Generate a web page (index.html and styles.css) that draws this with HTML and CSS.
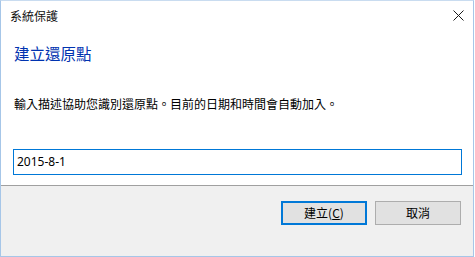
FILE: index.html
```html
<!DOCTYPE html>
<html lang="zh-Hant">
<head>
<meta charset="utf-8">
<link rel="stylesheet" href="styles.css">
</head>
<body>
<div class="window">
  <div class="titlebar">
    <span class="title">系統保護</span>
    <svg class="close" width="11" height="11" viewBox="0 0 11 11"><path d="M0.5 0.5 L10.5 10.5 M10.5 0.5 L0.5 10.5" stroke="#1a1a1a" stroke-width="1"/></svg>
  </div>
  <div class="content">
    <div class="heading">建立還原點</div>
    <div class="desc">輸入描述協助您識別還原點。目前的日期和時間會自動加入。</div>
    <div class="input">2015-8-1</div>
  </div>
  <div class="footer">
    <div class="btn default">建立(<u>C</u>)</div>
    <div class="btn">取消</div>
  </div>
</div>
</body>
</html>
```
FILE: styles.css
```css
html, body {
  margin: 0;
  padding: 0;
  background: #ffffff;
}
.window {
  box-sizing: border-box;
  width: 474px;
  height: 257px;
  border: 1px solid #a6c6e8;
  border-top-color: #c9dcf0;
  background: #ffffff;
  display: flex;
  flex-direction: column;
  font-family: "Noto Sans CJK TC", "Noto Sans", sans-serif;
  color: #000;
}
.titlebar {
  height: 30px;
  display: flex;
  align-items: center;
  justify-content: space-between;
  padding: 0 9px 0 9px;
}
.title {
  font-size: 12px;
  line-height: 30px;
  color: #111;
}
.close {
  margin-right: 0;
  margin-top: -1px;
}
.content {
  flex: 1;
  padding: 0 10px 0 12px;
}
.heading {
  margin-top: 12px;
  padding-left: 1px;
  font-size: 15.5px;
  line-height: 20px;
  color: #0033b0;
}
.desc {
  margin-top: 33px;
  padding-left: 1px;
  font-size: 12px;
  line-height: 16px;
}
.input {
  box-sizing: border-box;
  margin-top: 37px;
  width: 449px;
  height: 26px;
  border: 1px solid #0078d7;
  padding-left: 3px;
  font-family: "Noto Sans", sans-serif;
  font-size: 12px;
  line-height: 24px;
  color: #000;
}
.footer {
  height: 55px;
  border-top: 1px solid #a0a0a0;
  background: #f0f0f0;
  display: flex;
  justify-content: flex-end;
  align-items: flex-start;
  gap: 8px;
  padding: 15px 12px 0 0;
}
.btn {
  box-sizing: border-box;
  width: 86px;
  height: 24px;
  background: #e1e1e1;
  border: 1px solid #adadad;
  font-size: 12px;
  line-height: 22px;
  text-align: center;
  color: #000;
}
.btn.default {
  border: 2px solid #0078d7;
  line-height: 20px;
}
.btn u {
  text-decoration-thickness: 1px;
  text-underline-offset: 1px;
}
```
